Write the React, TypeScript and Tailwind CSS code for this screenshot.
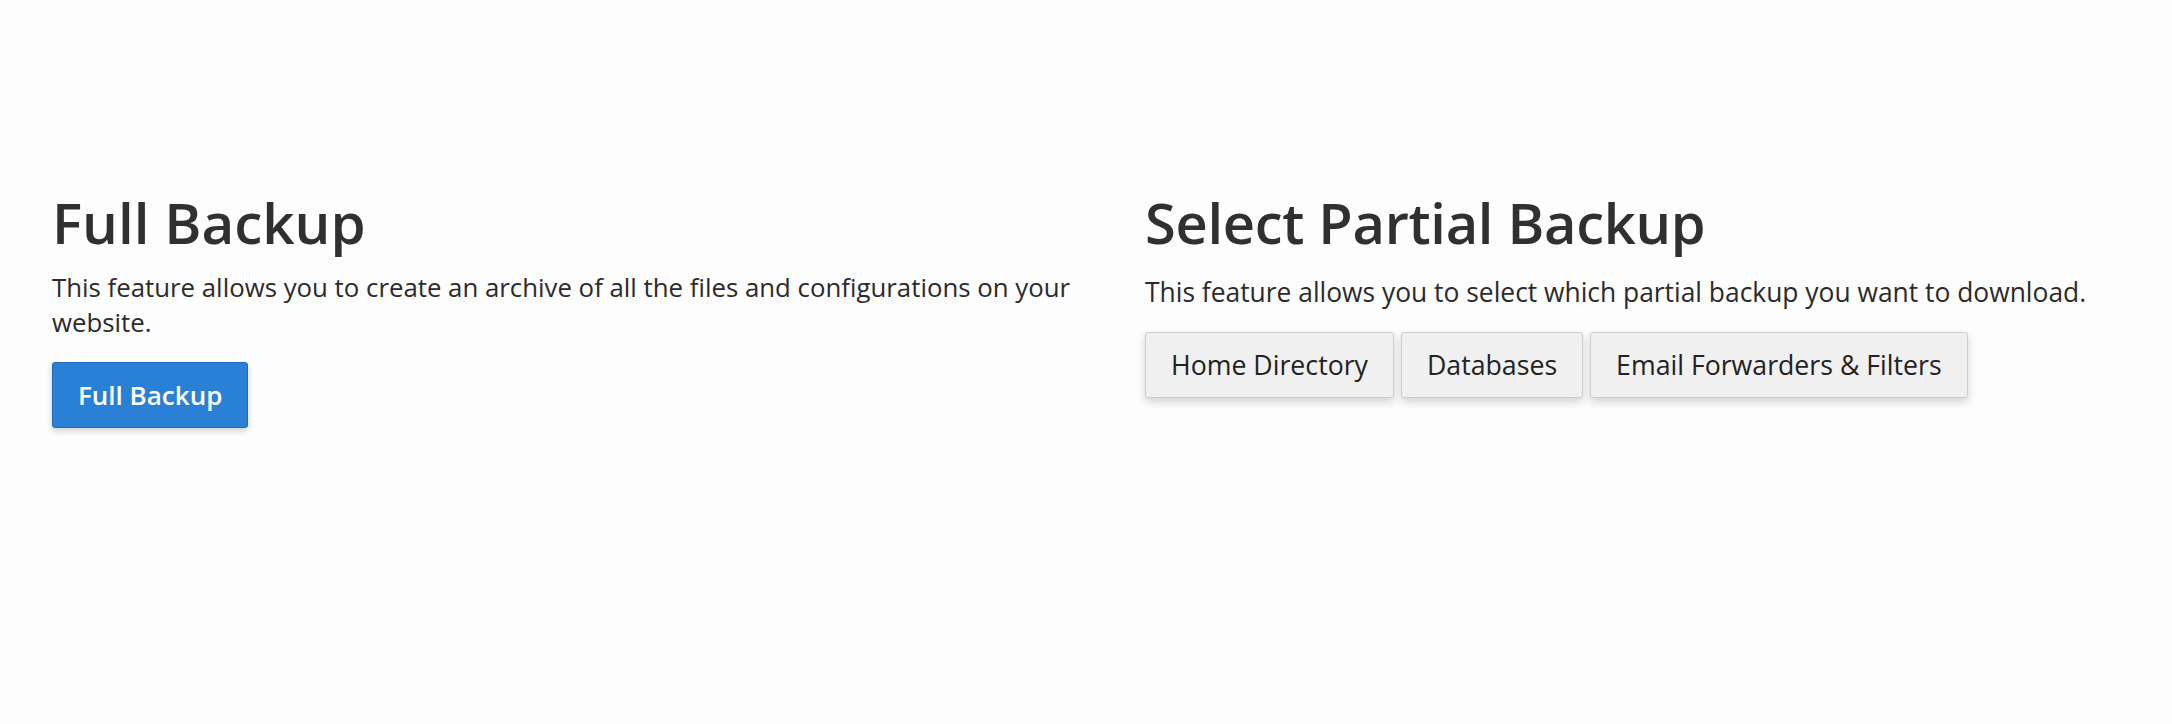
import React from 'react';

/**
 * 备份页面
 * 左侧：完整备份；右侧：选择部分备份
 */
const partialItems = ['Home Directory', 'Databases', 'Email Forwarders & Filters'];

const App: React.FC = () => {
  return (
    <div className="min-h-screen w-full bg-[#fdfdfd] font-['Open_Sans','Liberation_Sans',sans-serif] text-[#2b2b2b]">
      <div className="flex pl-[52px] pr-[40px] pt-[192px]">
        {/* 完整备份 */}
        <section className="w-[1093px] shrink-0 pr-[20px]">
          <h1 className="text-[56.5px] font-semibold leading-[1.1] text-[#303030]">Full Backup</h1>
          <p className="mt-[16px] text-[25.8px] leading-[35px]">
            This feature allows you to create an archive of all the files and configurations on your website.
          </p>
          <button className="mt-[22px] h-[66px] rounded-[3px] border border-[#1f6cbc] bg-[#2a80d4] px-[25px] text-[26px] font-semibold text-white shadow-[0_3px_6px_rgba(0,0,0,0.18)]">
            Full Backup
          </button>
        </section>

        {/* 选择部分备份 */}
        <section className="flex-1">
          <h1 className="text-[56px] font-semibold leading-[1.1] tracking-[-0.3px] text-[#303030]">Select Partial Backup</h1>
          <p className="mt-[21px] text-[26.4px] leading-[35px]">
            This feature allows you to select which partial backup you want to download.
          </p>
          <div className="mt-[22px] flex gap-[7px]">
            {partialItems.map((item) => (
              <button
                key={item}
                className="h-[66px] rounded-[3px] border border-[#cdcdcd] bg-[#f0f0f0] px-[25px] text-[26.7px] text-[#222] shadow-[0_4px_8px_rgba(0,0,0,0.17)]"
              >
                {item}
              </button>
            ))}
          </div>
        </section>
      </div>
    </div>
  );
};

export default App;
